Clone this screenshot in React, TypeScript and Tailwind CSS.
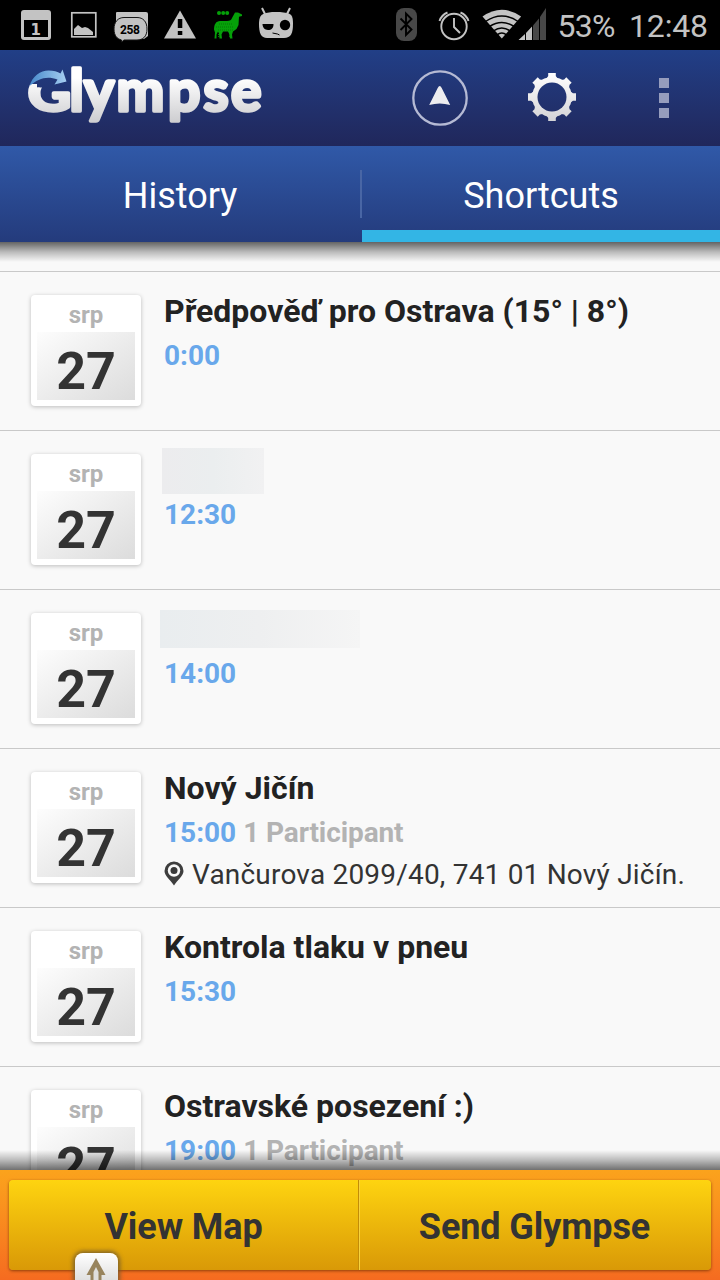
import React from "react";

type EventItem = {
  title?: string;
  blank?: string;
  time: string;
  participants?: string;
  address?: string;
};

const events: EventItem[] = [
  { title: "Předpověď pro Ostrava (15° | 8°)", time: "0:00" },
  { blank: "-ml-[2px] mt-[17px] h-[46px] w-[102px] from-[#ececee] via-[#ebeeef] to-[#f1f1f2] mb-[1px]", time: "12:30" },
  { blank: "-ml-[4px] mt-[20px] h-[38px] w-[200px] from-[#e9edef] via-[#eeeff0] to-[#f5f5f5] mb-[6px]", time: "14:00" },
  { title: "Nový Jičín", time: "15:00", participants: "1 Participant", address: "Vančurova 2099/40, 741 01 Nový Jičín." },
  { title: "Kontrola tlaku v pneu", time: "15:30" },
  { title: "Ostravské posezení :)", time: "19:00", participants: "1 Participant" },
];

function StatusBar() {
  return (
    <div className="flex h-[50px] shrink-0 items-center bg-black">
      <svg className="h-[50px] w-[300px] shrink-0" viewBox="0 0 300 50" fill="#c3c3c3">
        <rect x="21" y="10" width="30" height="30" rx="3" />
        <rect x="24" y="20" width="24" height="17" fill="#000" />
        <text x="35.7" y="34.7" fontFamily="DejaVu Sans" fontWeight="700" fontSize="15" textAnchor="middle">1</text>
        <rect x="71.8" y="12.8" width="24" height="24" fill="none" stroke="#c3c3c3" strokeWidth="1.7" />
        <path d="M74 35v-6l4-4 4 3 3-1 3 1 5 4v3z" />
        <path d="M116 13q0-1 1-1h29q2 0 2 2v22l-4 3h-22l-6-10z" />
        <path d="M124 17.500h13c6 0 10 4 10 11.500s-4 11-10 11h-13l-2.500 2v-2c-4-1-7.500-4-7.500-11s4-11.500 10-11.500z" stroke="#151515" strokeWidth="1" />
        <text x="130" y="34" fontFamily="Roboto" fontWeight="700" fontSize="12" textAnchor="middle" fill="#000" textLength="20">258</text>
        <path d="M180 10.500l16 28h-32z" />
        <path d="M177.800 19h4.500v9h-4.500zM177.800 31h4.500v4h-4.500z" fill="#000" />
        <g fill="#05a009">
          <path d="M235 12.500h3l4 2v1.500l-3 .700-.500 8.300-2 4-3.500 2.500-1 3 .500 4h-2.500l-1-5-1-2h-5l-1.500 3 .500 4h-2.500l-.500-5-1-2-1.500 3v4h-2l.500-6-1-3c0-5 2-8.500 6-8.500h7c3 0 4.500-1 5-3z" />
          <circle cx="219" cy="13" r="2" />
          <circle cx="223.200" cy="13" r="2" />
          <circle cx="227.200" cy="13" r="2" />
        </g>
        <path d="M216 27h18M218 30h15M219 24h14M218.500 34v4M229.500 34v4" stroke="#067506" strokeWidth="1" strokeDasharray="1 1" />
        <path d="M259 24c0-7 2-10 7-11l6-1h8l7 1c5 1 6 4 6 11 0 9-2 14-9 14h-17c-6 0-8-5-8-14z" />
        <path d="M262 8l3 6M290 8l-3 6" stroke="#c3c3c3" strokeWidth="2" />
        <path d="M262.500 24h11c0 4-2 6-5.500 6s-5.500-3-5.500-6z" fill="#000" />
        <circle cx="285" cy="25" r="5.200" fill="#000" />
        <path d="M272.500 33l5 1 2 1" stroke="#000" strokeWidth="1" fill="none" />
      </svg>
      <div className="flex-1" />
      <svg className="h-[50px] w-[150px] shrink-0" viewBox="390 0 150 50">
        <rect x="396" y="8" width="21" height="33" rx="8" fill="#484848" />
        <path d="M400.500 18.500l11 11-5.500 5.500v-21.500l5.500 5.500-11 11" fill="none" stroke="#000" strokeWidth="1.900" />
        <circle cx="454" cy="26.500" r="12.700" fill="none" stroke="#c3c3c3" strokeWidth="1.900" />
        <path d="M454 18v9l6 6M439.500 21q2-6 8-8.500M468.500 21q-2-6-8-8.500" fill="none" stroke="#c3c3c3" strokeWidth="1.900" />
        <path d="M501.800 38.500l-19.300-22q19.300-13.500 38.600 0z" fill="#c3c3c3" />
        <path d="M485.500 21.500q16.300-11 32.600 0M489.500 26.500q12.300-8 24.600 0M493.500 30.800q8.300-5.500 16.600 0M497 34.800q4.800-3.500 9.600 0" fill="none" stroke="#000" strokeWidth="1.500" />
        <path d="M518.500 40l6.500-6v6zM526 33l6-6.500v13.500h-6z" fill="#c3c3c3" />
        <path d="M533 25.500l6-7v21.500h-6z" fill="#484848" />
      </svg>
      <svg className="h-[50px] w-[180px] shrink-0" viewBox="540 0 180 50" fill="#c3c3c3" fontFamily="Roboto" fontSize="32">
        <path d="M540 17l6-9v32h-6z" fill="#484848" />
        <text x="557.500" y="37" textLength="58">53%</text>
        <text x="629" y="37" textLength="79">12:48</text>
      </svg>
    </div>
  );
}

function Logo() {
  return (
    <svg className="h-[96px] w-[300px]" viewBox="0 50 300 96">
      <defs>
        <linearGradient id="word" gradientUnits="userSpaceOnUse" x1="0" y1="78" x2="0" y2="124">
          <stop offset="0" stopColor="#fff" />
          <stop offset="1" stopColor="#cbcbce" />
        </linearGradient>
        <linearGradient id="arrow" x1="0" y1="0" x2="1" y2="0">
          <stop offset="0" stopColor="#4689cb" />
          <stop offset="1" stopColor="#a6cef2" />
        </linearGradient>
        <clipPath id="lower"><path d="M20 84h17v3.500h40v35h-57z" /></clipPath>
      </defs>
      <g fontFamily="Lato" fontWeight="700" stroke="url(#word)" strokeWidth="3.600" strokeLinejoin="round" fill="url(#word)">
        <g clipPath="url(#lower)">
          <text x="28" y="110.500" fontSize="50" textLength="43" lengthAdjust="spacingAndGlyphs">G</text>
        </g>
        <text x="69.500 84 116.500 168 203.500 231" y="111" fontSize="57">lympse</text>
      </g>
      <path d="M29.500 86c3-10 11-15.500 19-15.500 5 0 9 1 12 3l2-4 4 12-12 3 3-5c-11-4-19-1-28 6.500z" fill="url(#arrow)" />
    </svg>
  );
}

const teeth = [0, 45, 90, 135, 180, 225, 270, 315];

function Gear() {
  return (
    <svg className="h-[48px] w-[48px]" viewBox="-24 -24 48 48">
      <defs>
        <linearGradient id="gear" x1="0" y1="0" x2="0" y2="1">
          <stop offset="0" stopColor="#fff" />
          <stop offset="1" stopColor="#d3d3d6" />
        </linearGradient>
        <mask id="cog" maskUnits="userSpaceOnUse" x="-24" y="-24" width="48" height="48">
          <g fill="#fff">
            <circle r="19.900" />
            {teeth.map((angle) => (
              <path key={angle} d="M-3.800-24h7.600v3l2.400 3.500h-12.400l2.400-3.500z" transform={`rotate(${angle})`} />
            ))}
          </g>
          <circle r="14.500" fill="#000" />
        </mask>
      </defs>
      <rect x="-24" y="-24" width="48" height="48" fill="url(#gear)" mask="url(#cog)" />
    </svg>
  );
}

function Header() {
  return (
    <header className="flex h-[96px] shrink-0 items-center bg-linear-to-b from-[#213f87] to-[#20275b]">
      <Logo />
      <div className="ml-[112px] flex items-center">
        <svg className="h-[56px] w-[56px]" viewBox="0 0 56 56">
          <circle cx="28" cy="28" r="26.700" fill="none" stroke="#b5bad4" strokeWidth="2.300" />
          <path d="M27.700 16q1 0 2 2l8.500 17q-10.500-3-21 0l8.500-17q1-2 2-2z" fill="#ededef" />
        </svg>
        <div className="-mt-[2px] ml-[60px]"><Gear /></div>
        <div className="ml-[83px] flex flex-col gap-[5px]">
          <span className="size-[10px] bg-[#969dbd]" />
          <span className="size-[10px] bg-[#969dbd]" />
          <span className="size-[10px] bg-[#969dbd]" />
        </div>
      </div>
    </header>
  );
}

function EventRow({ item }: { item: EventItem }) {
  return (
    <div className="flex h-[159px] shrink-0 border-t border-[#c9c9c9] pl-[31px]">
      <div className="mt-[23px] flex h-[111px] w-[110px] shrink-0 flex-col rounded-[4px] bg-white px-[6px] pb-[6px] shadow-[0_1px_4px_rgba(0,0,0,0.25)]">
        <div className="flex h-[37px] items-center justify-center pt-[3px] text-[24px] leading-none font-bold text-[#b3b3b3]">srp</div>
        <div className="flex flex-1 items-center justify-center bg-linear-to-br from-[#fdfdfd] to-[#dcdcdc] pt-[12px] text-[52px] leading-none font-bold text-[#333]">27</div>
      </div>
      <div className="ml-[23px] flex flex-col items-start whitespace-nowrap">
        {item.title ? (
          <div className="flex h-[64px] items-center pt-[14px] text-[32px] leading-[36px] font-bold text-[#222]">{item.title}</div>
        ) : (
          <div className={`bg-linear-to-r ${item.blank}`} />
        )}
        <div className="flex h-[40px] items-center gap-[7px] text-[28px] leading-[32px] font-bold text-[#69a8eb]">
          <span>{item.time}</span>
          {item.participants && <span className="tracking-[-0.1px] text-[#b3b3b3]">{item.participants}</span>}
        </div>
        {item.address && (
          <div className="flex h-[44px] items-center gap-[8px] text-[28px] tracking-[0.2px] text-[#333]">
            <svg className="mb-[4px] h-[25px] w-[20px]" viewBox="0 0 20 25">
              <path d="M10 .500a9.500 9.500 0 0 1 9.500 9.500c0 5-6 9-9.500 14.500C6.500 19 .500 15 .500 10a9.500 9.500 0 0 1 9.500-9.500z" fill="#3e3e3e" />
              <circle cx="10" cy="9.500" r="6.200" fill="#f9f9f9" />
              <circle cx="10" cy="9.500" r="3.500" fill="#383838" />
            </svg>
            <span>{item.address}</span>
          </div>
        )}
      </div>
    </div>
  );
}

export default function App() {
  return (
    <div className="flex h-[1280px] w-[720px] flex-col overflow-hidden bg-[#f9f9f9] font-['Roboto',sans-serif]">
      <StatusBar />
      <Header />
      <nav className="flex h-[96px] shrink-0 items-center bg-linear-to-b from-[#3059a8] to-[#243b7c] text-[36px] text-white">
        <div className="flex h-full flex-1 items-center justify-center pt-[3px]">History</div>
        <div className="h-[48px] w-[2px] bg-[#4966a5]" />
        <div className="flex h-full w-[358px] items-center justify-center border-b-[12px] border-[#33b5e5] pt-[15px]">Shortcuts</div>
      </nav>
      <main className="relative flex min-h-0 flex-1 flex-col overflow-hidden pt-[29px]">
        {events.map((item) => <EventRow key={item.time} item={item} />)}
        <div className="absolute inset-x-0 top-0 h-[20px] bg-linear-to-b from-black/60 via-black/25 to-transparent" />
        <div className="absolute inset-x-0 bottom-0 h-[20px] bg-linear-to-t from-black/55 via-black/25 to-transparent" />
      </main>
      <footer className="relative flex h-[110px] shrink-0 bg-linear-to-b from-[#fba31c] to-[#f56b20] px-[9px] pt-[10px] pb-[10px]">
        <div className="flex flex-1 rounded-[4px] bg-linear-to-b from-[#fed410] to-[#d99907] text-[36px] font-bold text-[#333] shadow-[0_1px_3px_rgba(100,40,0,0.7)]">
          <div className="flex flex-1 items-center justify-center border-r border-[#c28c08] pt-[4px] tracking-[-0.1px]">View Map</div>
          <div className="flex flex-1 items-center justify-center border-l border-[#f6d33d] pt-[4px] pr-[2px] tracking-[-0.1px]">Send Glympse</div>
        </div>
        <div className="absolute top-[83px] left-[75px] h-[34px] w-[43px] rounded-[8px] bg-linear-to-b from-white to-[#d8d8d8] shadow-[0_0_4px_2px_rgba(112,88,45,0.85)]">
          <svg className="h-[34px] w-[43px]" viewBox="0 0 43 34">
            <path d="M21 5l9.500 17h-4v12h-11v-12h-4z" fill="#98845d" />
            <path d="M21 14l2.500 5v15h-5v-15z" fill="#e0dfdd" />
          </svg>
        </div>
      </footer>
    </div>
  );
}
